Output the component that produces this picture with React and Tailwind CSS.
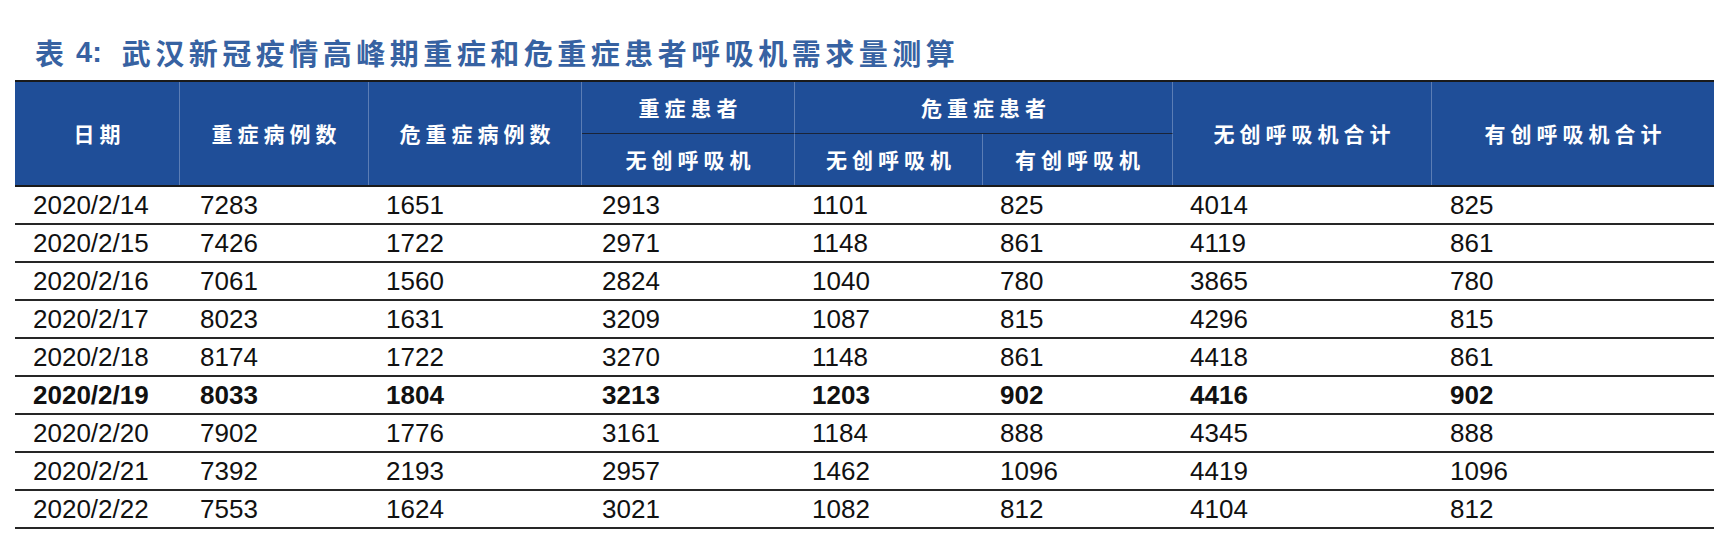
import React from "react";

const rows = [
  ["2020/2/14", "7283", "1651", "2913", "1101", "825", "4014", "825"],
  ["2020/2/15", "7426", "1722", "2971", "1148", "861", "4119", "861"],
  ["2020/2/16", "7061", "1560", "2824", "1040", "780", "3865", "780"],
  ["2020/2/17", "8023", "1631", "3209", "1087", "815", "4296", "815"],
  ["2020/2/18", "8174", "1722", "3270", "1148", "861", "4418", "861"],
  ["2020/2/19", "8033", "1804", "3213", "1203", "902", "4416", "902"],
  ["2020/2/20", "7902", "1776", "3161", "1184", "888", "4345", "888"],
  ["2020/2/21", "7392", "2193", "2957", "1462", "1096", "4419", "1096"],
  ["2020/2/22", "7553", "1624", "3021", "1082", "812", "4104", "812"],
];

const pads = [
  "pl-[18px]",
  "pl-[20px]",
  "pl-[17px]",
  "pl-[20px]",
  "pl-[17px]",
  "pl-[17px]",
  "pl-[17px]",
  "pl-[18px]",
];

const cols = "grid grid-cols-[165px_189px_213px_213px_188px_190px_259px_282px]";

function H({ children, className = "" }) {
  return (
    <div
      className={
        "flex items-center justify-center text-white font-bold text-[21px] tracking-[5px] pl-[5px] font-['Noto_Sans_CJK_SC',sans-serif] " +
        className
      }
    >
      {children}
    </div>
  );
}

export default function App() {
  return (
    <div className="w-[1732px] h-[556px] bg-white font-['Liberation_Sans',Arial,sans-serif] overflow-hidden">
      <div className="h-[80px] pt-[37px] pl-[35px] flex items-start text-[#3762a2]">
        <span className="text-[29px] leading-[30px] font-semibold font-['Noto_Sans_CJK_SC',sans-serif]">表</span>
        <span className="ml-[12px] text-[29px] leading-[30px] font-bold font-['Liberation_Sans',sans-serif]">4:</span>
        <span className="ml-[20px] text-[29px] leading-[30px] font-semibold tracking-[4.5px] font-['Noto_Sans_CJK_SC',sans-serif]">
          武汉新冠疫情高峰期重症和危重症患者呼吸机需求量测算
        </span>
      </div>

      <div className="ml-[15px] w-[1699px]">
        <div className={cols + " grid-rows-[52px_51px] bg-[#1f4e98] border-t-2 border-b-2 border-[#1a1a1a]"}>
          <H className="col-start-1 row-start-1 row-span-2 border-r border-[#5b7db5]">日期</H>
          <H className="col-start-2 row-start-1 row-span-2 border-r border-[#5b7db5]">重症病例数</H>
          <H className="col-start-3 row-start-1 row-span-2 border-r border-[#5b7db5]">危重症病例数</H>
          <H className="col-start-4 row-start-1 border-r border-b border-r-[#5b7db5] border-b-[#1a2438]">重症患者</H>
          <H className="col-start-5 col-span-2 row-start-1 border-r border-b border-r-[#5b7db5] border-b-[#1a2438]">危重症患者</H>
          <H className="col-start-7 row-start-1 row-span-2 border-r border-[#5b7db5]">无创呼吸机合计</H>
          <H className="col-start-8 row-start-1 row-span-2">有创呼吸机合计</H>
          <H className="col-start-4 row-start-2 border-r border-[#5b7db5]">无创呼吸机</H>
          <H className="col-start-5 row-start-2 border-r border-[#5b7db5]">无创呼吸机</H>
          <H className="col-start-6 row-start-2 border-r border-[#5b7db5]">有创呼吸机</H>
        </div>

        {rows.map((r, i) => {
          const bold = r[0] === "2020/2/19";
          return (
            <div
              key={i}
              className={cols + " h-[38px] border-b-2 border-[#262626] items-center text-[26px] leading-none text-[#111] " + (bold ? "font-bold" : "font-normal")}
            >
              {r.map((v, j) => (
                <div key={j} className={pads[j]}>
                  {v}
                </div>
              ))}
            </div>
          );
        })}
      </div>
    </div>
  );
}
